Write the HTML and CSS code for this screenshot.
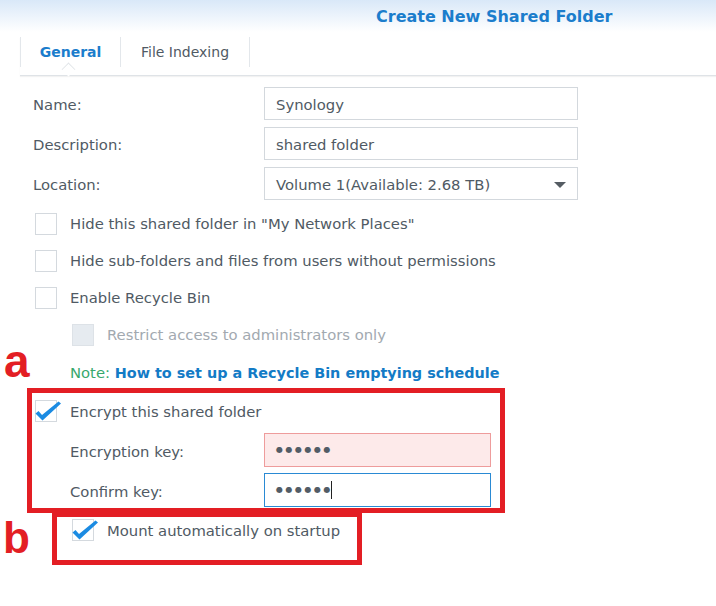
FILE: index.html
```html
<!DOCTYPE html>
<html lang="en">
<head>
<meta charset="UTF-8">
<title>Create New Shared Folder</title>
<link rel="stylesheet" href="styles.css">
</head>
<body>
<div class="header">
  <h1 class="title">Create New Shared Folder</h1>
</div>

<div class="tabs">
  <div class="tab active">General<span class="notch"></span></div>
  <div class="tab">File Indexing</div>
</div>

<div class="form">
  <div class="field">
    <label>Name:</label>
    <div class="input">Synology</div>
  </div>
  <div class="field">
    <label>Description:</label>
    <div class="input">shared folder</div>
  </div>
  <div class="field last">
    <label>Location:</label>
    <div class="input select">Volume 1(Available: 2.68 TB)<span class="arrow"></span></div>
  </div>

  <div class="check-row"><span class="box"></span>Hide this shared folder in "My Network Places"</div>
  <div class="check-row"><span class="box"></span>Hide sub-folders and files from users without permissions</div>
  <div class="check-row"><span class="box"></span>Enable Recycle Bin</div>
  <div class="check-row indent disabled"><span class="box"></span>Restrict access to administrators only</div>

  <div class="note"><span class="note-label">Note:</span>&nbsp;<a href="#">How to set up a Recycle Bin emptying schedule</a></div>

  <!-- annotation a -->
  <div class="mark-box box-a">
    <span class="mark mark-a">a</span>
    <div class="check-row"><span class="box checked"><svg viewBox="0 0 22 22"><path d="M0.5 13.5 L3.5 11 L7 15 L23.5 1.5 L26 3.5 L7.5 20.5 Z"/></svg></span>Encrypt this shared folder</div>
    <div class="field sub">
      <label>Encryption key:</label>
      <div class="input invalid"><span class="dots">●●●●●●</span></div>
    </div>
    <div class="field sub">
      <label>Confirm key:</label>
      <div class="input focused"><span class="dots">●●●●●●</span><span class="caret"></span></div>
    </div>
  </div>

  <!-- annotation b -->
  <div class="mark-box box-b">
    <span class="mark mark-b">b</span>
    <div class="check-row"><span class="box checked"><svg viewBox="0 0 22 22"><path d="M0.5 13.5 L3.5 11 L7 15 L23.5 1.5 L26 3.5 L7.5 20.5 Z"/></svg></span>Mount automatically on startup</div>
  </div>
</div>
</body>
</html>
```

FILE: styles.css
```css
body {
  margin: 0;
  background-color: #fff;
  font-family: "DejaVu Sans", sans-serif;
  font-size: 14.8px;
  color: #505a64;
}

.header {
  height: 32px;
  background: linear-gradient(#d9e8f8, #fff);
  padding-left: 376px;
}

.title {
  margin: 0;
  font-size: 16px;
  line-height: 33px;
  color: #1b7dcc;
}

/* tab bar */
.tabs {
  display: flex;
  margin: 5px 0 0 20px;
  padding-bottom: 8px;
  border-bottom: 1px solid #dfe3e7;
  box-shadow: 0 1px 1px rgba(0, 0, 0, 0.05);
}

.tab {
  position: relative;
  height: 30px;
  line-height: 30px;
  font-size: 14px;
  text-align: center;
  border-right: 1px solid #e3e7eb;
}

.tab:first-child {
  width: 99px;
  border-left: 1px solid #e3e7eb;
}

.tab:nth-child(2) {
  width: 128px;
}

.tab.active {
  color: #1b7dcc;
  font-weight: bold;
}

.notch {
  position: absolute;
  left: 41px;
  bottom: -9px;
  width: 12px;
  height: 12px;
  background: #fff;
  border-left: 1px solid #dfe3e7;
  border-top: 1px solid #dfe3e7;
  transform: rotate(45deg) scale(0.75, 0.75);
  transform-origin: center;
}

/* form */
.form {
  margin-top: 11px;
}

.field {
  display: flex;
  align-items: center;
  padding-left: 33px;
  margin-bottom: 7px;
}

.field.last {
  margin-bottom: 5px;
}

.field label {
  width: 231px;
  padding-top: 2px;
}

.input {
  position: relative;
  box-sizing: border-box;
  width: 314px;
  height: 33px;
  padding: 1px 0 0 11px;
  line-height: 31px;
  border: 1px solid #d3d8dd;
  background: #fff;
}

.select .arrow {
  position: absolute;
  right: 11px;
  top: 14px;
  border-left: 6px solid transparent;
  border-right: 6px solid transparent;
  border-top: 6px solid #555c63;
}

.check-row {
  display: flex;
  align-items: center;
  gap: 13px;
  height: 37px;
  padding-left: 35px;
}

.check-row.indent {
  padding-left: 72px;
}

.box {
  box-sizing: border-box;
  flex: none;
  width: 22px;
  height: 22px;
  border: 1px solid #d4d9de;
  background: #fff;
}

.box svg {
  display: block;
  width: 22px;
  height: 22px;
  margin: -1px;
  overflow: visible;
  fill: #1b8be2;
}

.disabled {
  color: #a2a9b0;
}

.disabled .box {
  background: #e6ebf0;
  border-color: #dde2e7;
}

.note {
  height: 30px;
  line-height: 30px;
  margin-top: 5px;
  padding-left: 70px;
}

.note-label {
  color: #37a86c;
}

.note a {
  color: #137bc6;
  font-size: 14.4px;
  font-weight: bold;
  text-decoration: none;
}

/* red annotation boxes */
.mark-box {
  position: relative;
  box-sizing: border-box;
  border: 5px solid #e31e24;
}

.mark {
  position: absolute;
  font-family: "Liberation Sans", Arial, sans-serif;
  font-weight: bold;
  line-height: 1;
  color: #e31e24;
}

.box-a {
  width: 478px;
  margin-left: 27px;
  padding-bottom: 1px;
}

.box-a .check-row {
  height: 36px;
  padding-left: 3px;
}

.box-a .field {
  padding-left: 38px;
  margin: 4px 0 0;
}

.box-a .field + .field {
  margin-top: 6px;
}

.box-a .field label {
  width: 194px;
}

.box-a .input {
  width: 227px;
  height: 34px;
  line-height: 32px;
  padding-top: 0;
}

.mark-a {
  left: -28px;
  top: -55px;
  font-size: 46px;
}

.input.invalid {
  background: #fdeaea;
  border-color: #ee9c9c;
}

.input.focused {
  border-color: #2a8ad4;
}

.dots {
  font-size: 8px;
  letter-spacing: 2.5px;
  color: #525c66;
  vertical-align: top;
}

.caret {
  display: inline-block;
  width: 1px;
  height: 18px;
  margin-left: -2px;
  vertical-align: -4px;
  background: #222;
}

.box-b {
  width: 310px;
  margin: -1px 0 0 52px;
  padding: 0 0 17px 15px;
}

.box-b .check-row {
  height: 26px;
  padding-left: 0;
}

.mark-b {
  left: -54px;
  top: -1px;
  font-size: 44px;
}
```
